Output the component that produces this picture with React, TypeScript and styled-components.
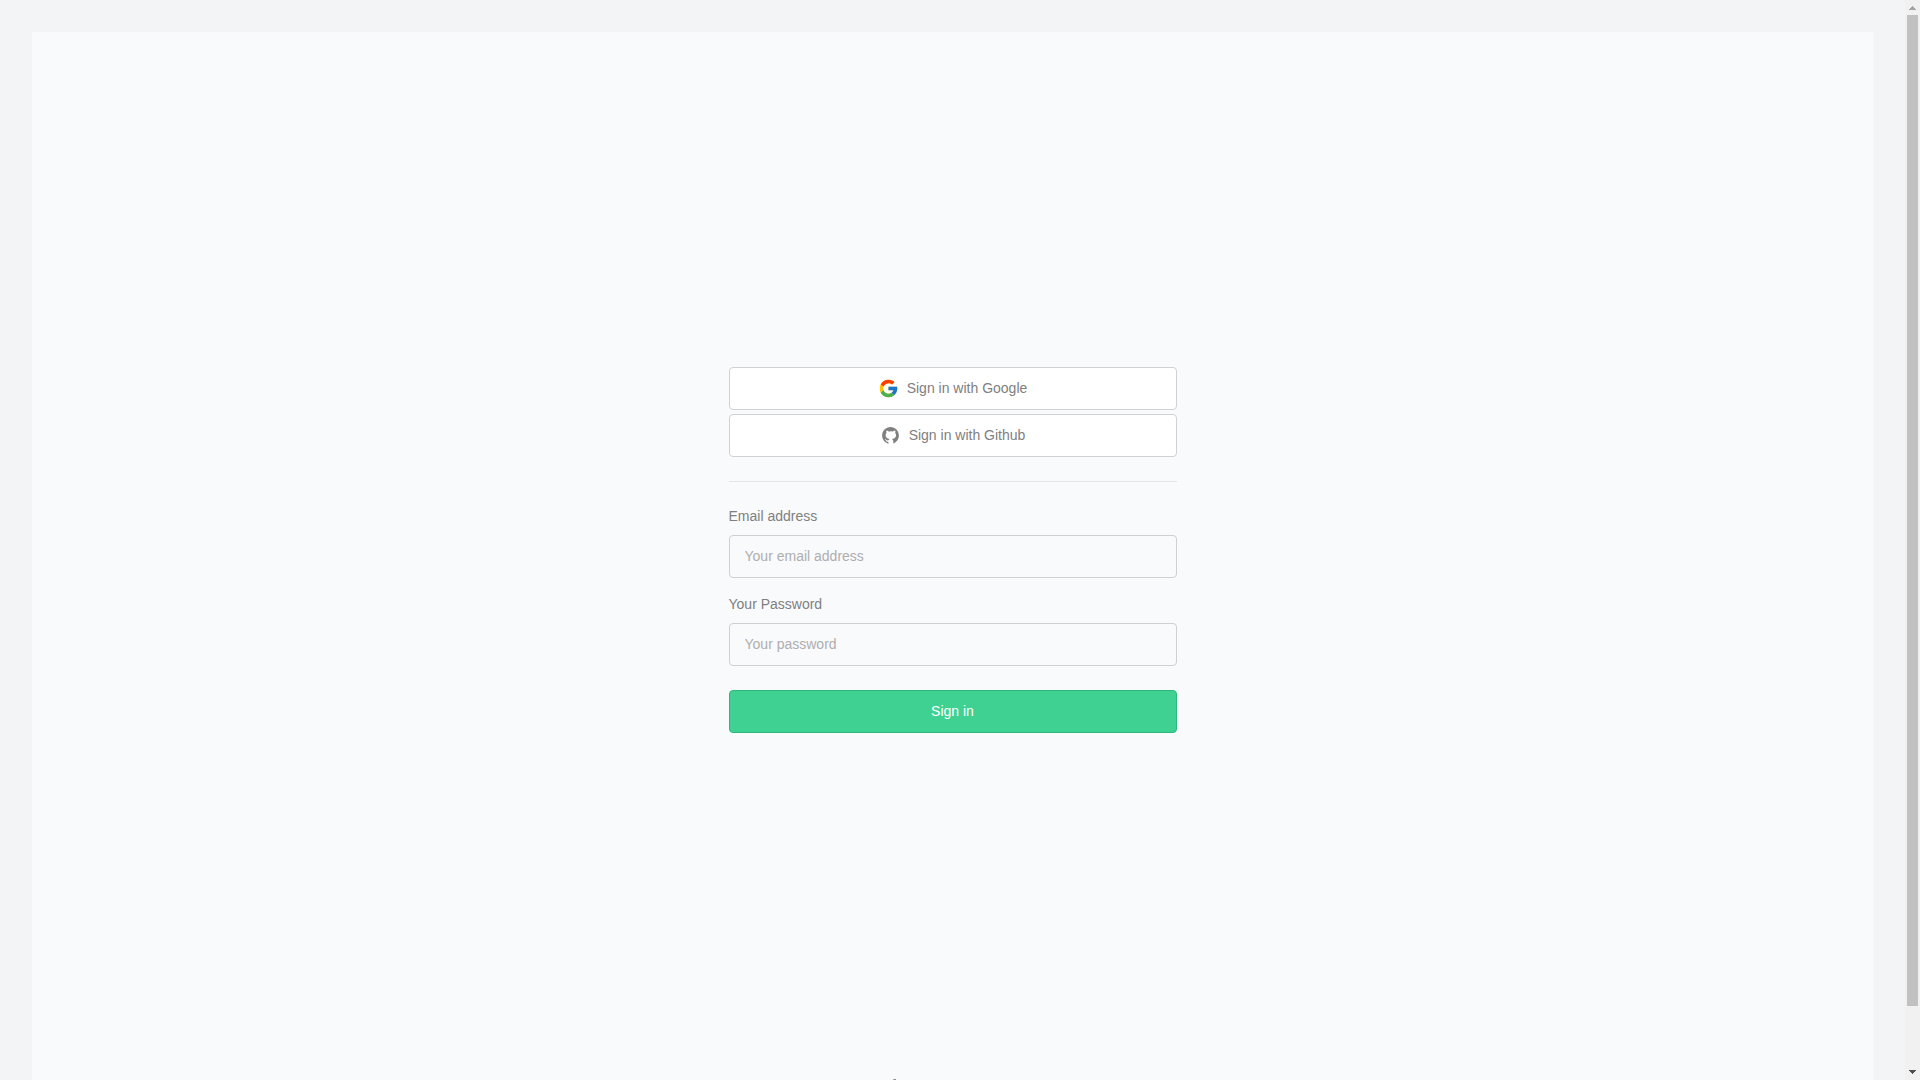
import React from "react";
import styled, { createGlobalStyle } from "styled-components";

const GlobalStyle = createGlobalStyle`
  *, *::before, *::after { box-sizing: border-box; }
  body {
    margin: 0;
    background: #f3f4f6;
    color: #808080;
    font-family: "Liberation Sans", Arial, sans-serif;
    font-size: 14px;
    line-height: 17px;
  }
`;

const Shell = styled.div`
  display: flex;
  height: 100vh;
`;

const Page = styled.div`
  flex: 1;
  min-width: 0;
  padding: 32px;
  overflow-y: auto;
  scrollbar-width: none;
`;

const Panel = styled.main`
  display: grid;
  grid-template-rows: 1fr auto 1fr;
  justify-items: center;
  min-height: 100vh;
  background: #f9fafc;
`;

const Auth = styled.section`
  grid-row: 2;
  display: flex;
  flex-direction: column;
  width: 100%;
  max-width: 448px;
  padding-bottom: 44px;
`;

const Providers = styled.div`
  display: flex;
  flex-direction: column;
  gap: 4px;
`;

const Button = styled.button<{ $primary?: boolean }>`
  display: flex;
  align-items: center;
  justify-content: center;
  gap: 8px;
  width: 100%;
  height: 43px;
  padding: 0 16px;
  border: 1px solid ${(p) => (p.$primary ? "#2eb67d" : "#d0d1d3")};
  border-radius: 4px;
  background: ${(p) => (p.$primary ? "#3fd191" : "#ffffff")};
  color: ${(p) => (p.$primary ? "#ffffff" : "#808080")};
  font: inherit;
  cursor: pointer;
`;

const Divider = styled.hr`
  width: 100%;
  height: 1px;
  margin: 24px 0;
  border: 0;
  background: #e4e5e8;
`;

const Form = styled.form`
  display: flex;
  flex-direction: column;
  gap: 24px;
`;

const Fields = styled.div`
  display: flex;
  flex-direction: column;
  gap: 16px;
`;

const Field = styled.div`
  display: flex;
  flex-direction: column;
  gap: 8px;
`;

const Label = styled.label`
  line-height: 21px;
`;

const Input = styled.input`
  width: 100%;
  height: 43px;
  padding: 0 15px 2px;
  border: 1px solid #cfd0d4;
  border-radius: 4px;
  background: transparent;
  color: #555555;
  font: inherit;

  &::placeholder { color: #aeaeae; opacity: 1; }
`;

const Footer = styled.footer`
  grid-row: 3;
  align-self: end;
  display: flex;
  width: 128px;
`;

const Scrollbar = styled.div`
  display: flex;
  flex-direction: column;
  width: 15px;
  background: #f1f1f1;
`;

const Arrow = styled.svg`
  display: block;
  flex: none;
  width: 15px;
  height: 15px;
`;

const Track = styled.div`
  flex: 1;
  padding: 0 2px;
`;

const Thumb = styled.div`
  height: calc(100% * 1080 / 1144);
  background: #c1c1c1;
`;

const GoogleIcon = () => (
  <svg width="21" height="21" viewBox="0 0 48 48" aria-hidden="true">
    <path fill="#FFC107" d="M43.611 20.083H42V20H24v8h11.303c-1.649 4.657-6.08 8-11.303 8-6.627 0-12-5.373-12-12s5.373-12 12-12c3.059 0 5.842 1.154 7.961 3.039l5.657-5.657C34.046 6.053 29.268 4 24 4 12.955 4 4 12.955 4 24s8.955 20 20 20 20-8.955 20-20c0-1.341-.138-2.65-.389-3.917z" />
    <path fill="#FF3D00" d="m6.306 14.691 6.571 4.819C14.655 15.108 18.961 12 24 12c3.059 0 5.842 1.154 7.961 3.039l5.657-5.657C34.046 6.053 29.268 4 24 4 16.318 4 9.656 8.337 6.306 14.691z" />
    <path fill="#4CAF50" d="M24 44c5.166 0 9.86-1.977 13.409-5.192l-6.19-5.238A11.91 11.91 0 0 1 24 36c-5.202 0-9.619-3.317-11.283-7.946l-6.522 5.025C9.505 39.556 16.227 44 24 44z" />
    <path fill="#1976D2" d="M43.611 20.083H42V20H24v8h11.303a12.04 12.04 0 0 1-4.087 5.571l.003-.002 6.19 5.238C36.971 39.205 44 34 44 24c0-1.341-.138-2.65-.389-3.917z" />
  </svg>
);

const GithubIcon = () => (
  <svg width="21" height="21" viewBox="0 0 30 30" fill="#808080" aria-hidden="true">
    <path d="M15 3C8.373 3 3 8.373 3 15c0 5.623 3.872 10.328 9.092 11.63a1.751 1.751 0 0 1-.092-.583v-2.051h-1.508c-.821 0-1.551-.353-1.905-1.009-.393-.729-.461-1.844-1.435-2.526-.289-.227-.069-.486.264-.451.615.174 1.125.596 1.605 1.222.478.627.703.769 1.596.769.433 0 1.081-.025 1.691-.121.328-.833.895-1.6 1.588-1.962-3.996-.411-5.903-2.399-5.903-5.098 0-1.162.495-2.286 1.336-3.233-.276-.94-.623-2.857.106-3.587 1.798 0 2.885 1.166 3.146 1.481A8.993 8.993 0 0 1 15.495 9c1.036 0 2.024.174 2.922.483C18.675 9.17 19.763 8 21.565 8c.732.731.381 2.656.102 3.594.836.945 1.328 2.066 1.328 3.226 0 2.697-1.904 4.684-5.894 5.097C18.199 20.49 19 22.1 19 23.313v2.734c0 .104-.023.179-.035.268C23.641 24.676 27 20.236 27 15c0-6.627-5.373-12-12-12z" />
  </svg>
);

const BoltMark = () => (
  <svg width="14" height="33" viewBox="0 0 14 33" fill="#8c8c94" aria-hidden="true">
    <path d="M4.5 0H7v6h6L6.500 15V9H.5z" />
  </svg>
);

export default function App() {
  return (
    <>
      <GlobalStyle />
      <Shell>
        <Page>
          <Panel>
            <Auth>
              <Providers>
                <Button type="button"><GoogleIcon />Sign in with Google</Button>
                <Button type="button"><GithubIcon />Sign in with Github</Button>
              </Providers>
              <Divider />
              <Form onSubmit={(e) => e.preventDefault()}>
                <Fields>
                  <Field>
                    <Label htmlFor="email">Email address</Label>
                    <Input id="email" type="email" placeholder="Your email address" />
                  </Field>
                  <Field>
                    <Label htmlFor="password">Your Password</Label>
                    <Input id="password" type="password" placeholder="Your password" />
                  </Field>
                </Fields>
                <Button type="submit" $primary>Sign in</Button>
              </Form>
            </Auth>
            <Footer><BoltMark /></Footer>
          </Panel>
        </Page>
        <Scrollbar aria-hidden="true">
          <Arrow viewBox="0 0 15 15" fill="#a3a3a3" shapeRendering="crispEdges">
            <path d="M7 6h1v1h1v1h1v1h1v1H4V9h1V8h1V7h1z" />
          </Arrow>
          <Track><Thumb /></Track>
          <Arrow viewBox="0 0 15 15" fill="#505050" shapeRendering="crispEdges">
            <path d="M4 5h7v1h-1v1H9v1H8v1H7V8H6V7H5V6H4z" />
          </Arrow>
        </Scrollbar>
      </Shell>
    </>
  );
}
